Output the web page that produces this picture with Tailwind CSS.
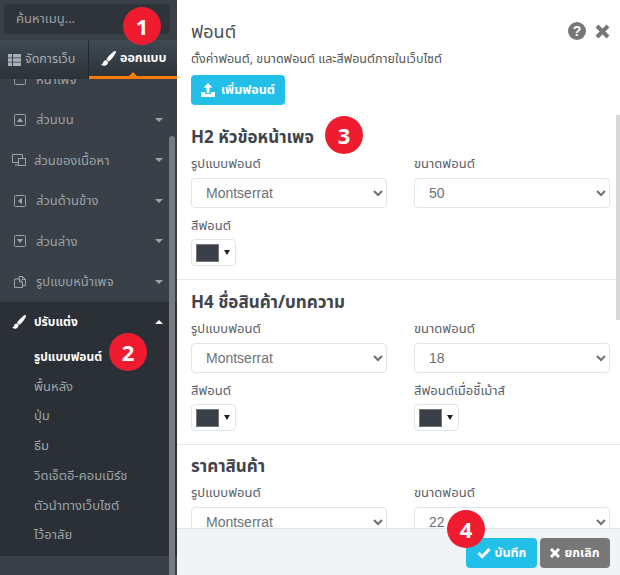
<!DOCTYPE html>
<html lang="th">
<head>
  <meta charset="UTF-8">
  <meta name="viewport" content="width=device-width, initial-scale=1.0">
  <title>ฟอนต์</title>
  <script src="https://cdn.jsdelivr.net/npm/@tailwindcss/browser@4"></script>
</head>
<body class="font-['Noto_Sans','Noto_Sans_Thai',sans-serif] bg-white">

  <div class="relative w-[620px] h-[575px] overflow-hidden flex">

    <!-- Sidebar -->
    <aside class="relative w-[177px] h-full shrink-0 flex flex-col bg-[#3a4047]">
      <div class="h-10 shrink-0 px-1 pt-1 bg-[#3a4047]">
        <div class="h-[30px] w-[166px] rounded bg-[#2e343a] pl-3 flex items-center text-[13px] text-[#9aa1a8]">ค้นหาเมนู...</div>
      </div>

      <div class="h-[39px] shrink-0 flex bg-gradient-to-b from-[#3f4a53] to-[#2b3238]">
        <div class="w-[89px] flex items-center pl-2 gap-1 text-[12.5px] text-[#a9b0b6] border-r border-[#23282d]">
          <svg class="w-[13px] h-[12px]" viewBox="0 0 13 12" fill="currentColor"><path d="M0 0h4v3.5H0zM5 0h8v3.5H5zM0 4.3h4v3.4H0zM5 4.3h8v3.4H5zM0 8.5h4V12H0zM5 8.5h8V12H5z"/></svg>
          จัดการเว็บ
        </div>
        <div class="relative flex-1 flex items-center pl-3 gap-1 text-[12.5px] font-bold text-white border-b-[3px] border-[#f57c00]">
          <svg class="w-[15px] h-[15px]" viewBox="0 0 15 15" fill="currentColor"><path d="M14.7.3c-.5-.5-1.3-.4-2 .2C10.500 2.400 7.500 5 6 7.200c-.3.500-.5.900-.6 1.300 1 .3 1.700 1 2 2 .4-.1.800-.3 1.300-.7C10.800 8.300 13 5 14.600 2.300c.4-.7.500-1.500.1-2zM4.800 9.200C3 9.200 2.400 10.500 2.100 11.800 1.900 12.700 1.200 13.300 0 13.500c1.200 1.200 3 1.500 4.500 1 1.500-.6 2.500-1.800 2.500-3.200 0-1.200-1-2.100-2.200-2.100z"/></svg>
          ออกแบบ
          <span class="absolute left-[40px] bottom-0 w-0 h-0 border-x-4 border-x-transparent border-b-4 border-b-[#f57c00]"></span>
        </div>
      </div>

      <div class="relative flex-1 overflow-hidden text-[13px] text-[#9ca3a9]">
        <div class="-mt-[20px]">
          <div class="h-[40.500px] flex items-center pl-[14px] gap-[10px]">
            <svg class="w-3 h-3" viewBox="0 0 12 12" fill="none" stroke="currentColor"><rect x=".5" y=".5" width="11" height="11" rx="1"/></svg>
            หน้าเพจ
          </div>
          <div class="h-[40.500px] flex items-center pl-[14px] gap-[10px]">
            <svg class="w-3 h-3" viewBox="0 0 12 12" fill="none" stroke="currentColor"><rect x=".5" y=".5" width="11" height="11" rx="1"/><path d="M3.500 7.500 6 4.500l2.500 3z" fill="currentColor"/></svg>
            ส่วนบน
            <span class="ml-auto mr-[14px] w-0 h-0 border-x-4 border-x-transparent border-t-4 border-t-[#9ca3a9]"></span>
          </div>
          <div class="h-[40.500px] flex items-center pl-3 gap-[8px]">
            <svg class="w-[14px] h-3" viewBox="0 0 14 12" fill="none" stroke="currentColor"><path d="M6 8.500H.5v-8h10v4M3 11h3.500"/><rect x="6.500" y="4.500" width="7" height="7"/></svg>
            ส่วนของเนื้อหา
            <span class="ml-auto mr-[14px] w-0 h-0 border-x-4 border-x-transparent border-t-4 border-t-[#9ca3a9]"></span>
          </div>
          <div class="h-[40.500px] flex items-center pl-[14px] gap-[10px]">
            <svg class="w-3 h-3" viewBox="0 0 12 12" fill="none" stroke="currentColor"><rect x=".5" y=".5" width="11" height="11" rx="1"/><path d="M7.500 3.500 4.500 6l3 2.500z" fill="currentColor"/></svg>
            ส่วนด้านข้าง
            <span class="ml-auto mr-[14px] w-0 h-0 border-x-4 border-x-transparent border-t-4 border-t-[#9ca3a9]"></span>
          </div>
          <div class="h-[40.500px] flex items-center pl-[14px] gap-[10px]">
            <svg class="w-3 h-3" viewBox="0 0 12 12" fill="none" stroke="currentColor"><rect x=".5" y=".5" width="11" height="11" rx="1"/><path d="M3.500 4.500 6 7.500l2.500-3z" fill="currentColor"/></svg>
            ส่วนล่าง
            <span class="ml-auto mr-[14px] w-0 h-0 border-x-4 border-x-transparent border-t-4 border-t-[#9ca3a9]"></span>
          </div>
          <div class="h-[40.500px] flex items-center pl-[14px] gap-[10px]">
            <svg class="w-3 h-3" viewBox="0 0 12 12" fill="none" stroke="currentColor"><path d="M5 .5h3.500l3 3v6H9M8.500.5v3h3M5 3V.5"/><path d="M.5 3h5l3 3v5.500h-8zM5.500 3v3h3"/></svg>
            รูปแบบหน้าเพจ
            <span class="ml-auto mr-[14px] w-0 h-0 border-x-4 border-x-transparent border-t-4 border-t-[#9ca3a9]"></span>
          </div>

          <div class="bg-[#2b3036] pb-[6px]">
            <div class="h-10 flex items-center pl-3 gap-[8px] text-[12px] font-bold text-white">
              <svg class="w-[14px] h-[14px]" viewBox="0 0 15 15" fill="currentColor"><path d="M14.7.3c-.5-.5-1.3-.4-2 .2C10.500 2.400 7.500 5 6 7.200c-.3.500-.5.900-.6 1.300 1 .3 1.700 1 2 2 .4-.1.800-.3 1.300-.7C10.800 8.300 13 5 14.600 2.300c.4-.7.500-1.500.1-2zM4.800 9.200C3 9.200 2.400 10.500 2.100 11.800 1.900 12.700 1.200 13.300 0 13.500c1.200 1.200 3 1.500 4.500 1 1.500-.6 2.500-1.800 2.500-3.200 0-1.200-1-2.100-2.200-2.100z"/></svg>
              ปรับแต่ง
              <span class="ml-auto mr-[14px] w-0 h-0 border-x-4 border-x-transparent border-b-4 border-b-white"></span>
            </div>
            <div class="h-[29.700px] flex items-center pl-[34px] text-[12px] font-bold text-white">รูปแบบฟอนต์</div>
            <div class="h-[29.700px] flex items-center pl-[34px]">พื้นหลัง</div>
            <div class="h-[29.700px] flex items-center pl-[34px]">ปุ่ม</div>
            <div class="h-[29.700px] flex items-center pl-[34px]">ธีม</div>
            <div class="h-[29.700px] flex items-center pl-[34px]">วิดเจ็ตอี-คอมเมิร์ช</div>
            <div class="h-[29.700px] flex items-center pl-[34px]">ตัวนำทางเว็บไซต์</div>
            <div class="h-[29.700px] flex items-center pl-[34px]">ไว้อาลัย</div>
          </div>
        </div>
        <!-- scrollbar -->
        <div class="absolute right-[2px] top-[57px] bottom-0 w-[6px] rounded-t bg-[#777b7f]"></div>
      </div>
    </aside>

    <!-- Panel -->
    <main class="relative flex-1 h-full flex flex-col min-w-0">
      <div class="flex-1 overflow-hidden pl-[14px] pr-[10px] pt-[18px] text-[#5a6067]">
        <div class="flex items-center h-[26px]">
          <h1 class="text-[18px] text-[#4a4f55]">ฟอนต์</h1>
          <div class="ml-auto flex items-center gap-[9px] text-[#777] -mr-[0px]">
            <svg class="w-[18px] h-[18px]" viewBox="0 0 18 18"><circle cx="9" cy="9" r="9" fill="currentColor"/><text x="9" y="14" text-anchor="middle" font-size="14" font-weight="700" fill="#fff" font-family="Liberation Sans">?</text></svg>
            <svg class="w-[15px] h-[15px]" viewBox="0 0 15 15" fill="none" stroke="currentColor" stroke-width="4"><path d="M2 2l11 11M13 2 2 13"/></svg>
          </div>
        </div>
        <p class="mt-[5px] text-[12.500px] leading-[20px] text-[#555]">ตั้งค่าฟอนต์, ขนาดฟอนต์ และสีฟอนต์ภายในเว็บไซต์</p>
        <button class="mt-[6px] h-[30px] px-[10px] rounded bg-[#22c0e8] text-white text-[12.500px] font-bold flex items-center gap-[6px]">
          <svg class="w-[14px] h-[14px]" viewBox="0 0 14 14" fill="currentColor"><path d="M7 0l4.500 4.500H8.500V10h-3V4.500h-3zM0 9h4v2h6V9h4v5H0z"/></svg>
          เพิ่มฟอนต์
        </button>

        <h2 class="mt-[20px] text-[17px] leading-[24px] font-bold text-[#3f444a]">H2 หัวข้อหน้าเพจ</h2>
        <div class="mt-[4px] grid grid-cols-2 gap-x-[27px]">
          <div>
            <label class="block text-[13px] leading-[20px]">รูปแบบฟอนต์</label>
            <select class="mt-[5px] block w-full h-[30px] px-[10px] bg-white border border-[#dfe5eb] rounded text-[14px] text-[#6b7178] font-['Liberation_Sans',sans-serif]"><option>Montserrat</option></select>
          </div>
          <div>
            <label class="block text-[13px] leading-[20px]">ขนาดฟอนต์</label>
            <select class="mt-[5px] block w-full h-[30px] px-[10px] bg-white border border-[#dfe5eb] rounded text-[14px] text-[#6b7178] font-['Liberation_Sans',sans-serif]"><option>50</option></select>
          </div>
          <div class="mt-[7px]">
            <label class="block text-[13px] leading-[20px]">สีฟอนต์</label>
            <div class="mt-[4px] w-[45px] h-[27px] border border-[#dfe5eb] rounded flex items-center pl-1 gap-[5px]">
              <span class="w-[23px] h-[18px] bg-[#3a4047] border border-[#777]"></span>
              <span class="w-0 h-0 border-x-[3.500px] border-x-transparent border-t-[5px] border-t-[#222]"></span>
            </div>
          </div>
        </div>
        <hr class="mt-[13px] -ml-[14px] -mr-[10px] border-[#e4e8ec]">

        <h2 class="mt-[10px] text-[17px] leading-[24px] font-bold text-[#3f444a]">H4 ชื่อสินค้า/บทความ</h2>
        <div class="mt-[4px] grid grid-cols-2 gap-x-[27px]">
          <div>
            <label class="block text-[13px] leading-[20px]">รูปแบบฟอนต์</label>
            <select class="mt-[5px] block w-full h-[30px] px-[10px] bg-white border border-[#dfe5eb] rounded text-[14px] text-[#6b7178] font-['Liberation_Sans',sans-serif]"><option>Montserrat</option></select>
          </div>
          <div>
            <label class="block text-[13px] leading-[20px]">ขนาดฟอนต์</label>
            <select class="mt-[5px] block w-full h-[30px] px-[10px] bg-white border border-[#dfe5eb] rounded text-[14px] text-[#6b7178] font-['Liberation_Sans',sans-serif]"><option>18</option></select>
          </div>
          <div class="mt-[7px]">
            <label class="block text-[13px] leading-[20px]">สีฟอนต์</label>
            <div class="mt-[4px] w-[45px] h-[27px] border border-[#dfe5eb] rounded flex items-center pl-1 gap-[5px]">
              <span class="w-[23px] h-[18px] bg-[#3a4047] border border-[#777]"></span>
              <span class="w-0 h-0 border-x-[3.500px] border-x-transparent border-t-[5px] border-t-[#222]"></span>
            </div>
          </div>
          <div class="mt-[7px]">
            <label class="block text-[13px] leading-[20px]">สีฟอนต์เมื่อชี้เม้าส์</label>
            <div class="mt-[4px] w-[45px] h-[27px] border border-[#dfe5eb] rounded flex items-center pl-1 gap-[5px]">
              <span class="w-[23px] h-[18px] bg-[#3a4047] border border-[#777]"></span>
              <span class="w-0 h-0 border-x-[3.500px] border-x-transparent border-t-[5px] border-t-[#222]"></span>
            </div>
          </div>
        </div>
        <hr class="mt-[13px] -ml-[14px] -mr-[10px] border-[#e4e8ec]">

        <h2 class="mt-[9px] text-[17px] leading-[24px] font-bold text-[#3f444a]">ราคาสินค้า</h2>
        <div class="mt-[4px] grid grid-cols-2 gap-x-[27px]">
          <div>
            <label class="block text-[13px] leading-[20px]">รูปแบบฟอนต์</label>
            <select class="mt-[5px] block w-full h-[30px] px-[10px] bg-white border border-[#dfe5eb] rounded text-[14px] text-[#6b7178] font-['Liberation_Sans',sans-serif]"><option>Montserrat</option></select>
          </div>
          <div>
            <label class="block text-[13px] leading-[20px]">ขนาดฟอนต์</label>
            <select class="mt-[5px] block w-full h-[30px] px-[10px] bg-white border border-[#dfe5eb] rounded text-[14px] text-[#6b7178] font-['Liberation_Sans',sans-serif]"><option>22</option></select>
          </div>
        </div>
      </div>

      <!-- scrollbar -->
      <div class="absolute right-0 top-[115px] w-1 h-[205px] bg-[#d9d9d9]"></div>

      <footer class="h-[47px] shrink-0 bg-[#f1f4f7] border-t border-[#e2e6ea] flex justify-end items-start pt-[9px] pr-[10px] gap-[3px]">
        <button class="w-[71px] h-[30px] rounded bg-[#22c0e8] text-white text-[12.500px] font-bold flex items-center justify-center gap-1">
          <svg class="w-[14px] h-[12px]" viewBox="0 0 14 12" fill="none" stroke="currentColor" stroke-width="3"><path d="M1.500 6l3.700 3.700 7.300-7.700"/></svg>
          บันทึก
        </button>
        <button class="w-[70px] h-[30px] rounded bg-[#777] text-white text-[12.500px] font-bold flex items-center justify-center gap-1">
          <svg class="w-[10px] h-[10px]" viewBox="0 0 10 10" fill="none" stroke="currentColor" stroke-width="3"><path d="M1 1l8 8M9 1 1 9"/></svg>
          ยกเลิก
        </button>
      </footer>
    </main>

    <!-- Callout badges -->
    <span class="absolute left-[123px] top-[7px] w-[38px] h-[38px] rounded-full bg-[#ee1c2e] text-white text-[22px] font-bold flex items-center justify-center">1</span>
    <span class="absolute left-[109px] top-[333px] w-[38px] h-[38px] rounded-full bg-[#ee1c2e] text-white text-[22px] font-bold flex items-center justify-center">2</span>
    <span class="absolute left-[325px] top-[116px] w-[38px] h-[38px] rounded-full bg-[#ee1c2e] text-white text-[22px] font-bold flex items-center justify-center">3</span>
    <span class="absolute left-[447px] top-[510px] w-[38px] h-[38px] rounded-full bg-[#ee1c2e] text-white text-[22px] font-bold flex items-center justify-center">4</span>
  </div>

</body>
</html>
